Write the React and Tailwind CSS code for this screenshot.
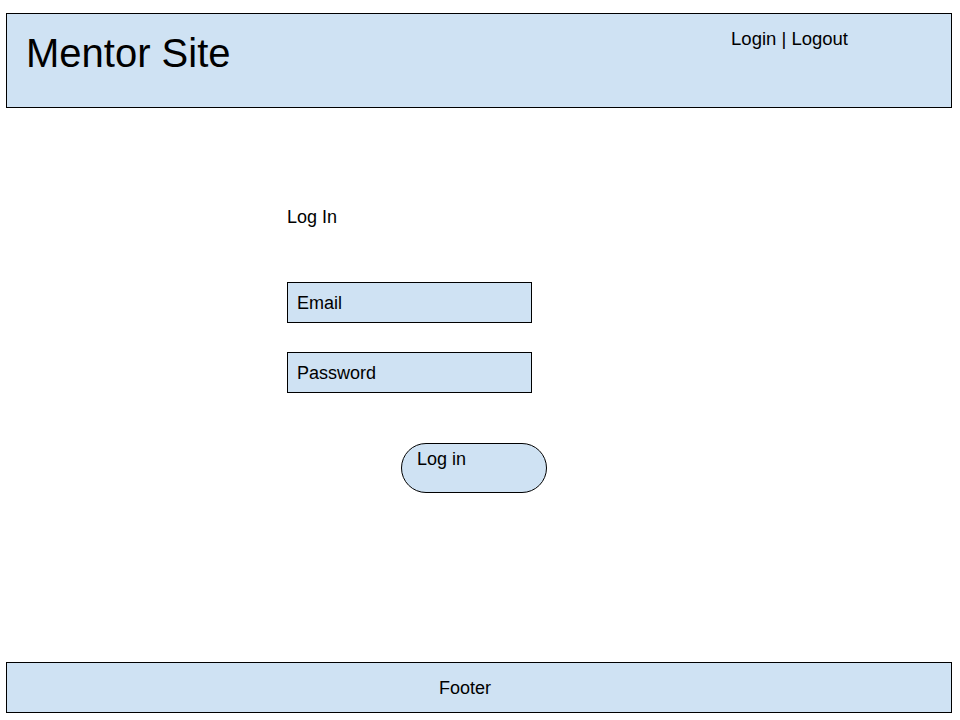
import React from 'react'

export default function App() {
  return (
    <div className="w-[960px] h-[720px] bg-white flex flex-col text-black font-['Liberation_Sans',Arial,sans-serif]">
      <header className="ml-[6px] mt-[13px] w-[946px] h-[95px] border border-black bg-[#cfe2f3] flex justify-between">
        <h1 className="text-[40px] leading-none pl-[19px] pt-[19px]">Mentor Site</h1>
        <div className="text-[18.5px] leading-none pt-[16px] pr-[103px]">Login | Logout</div>
      </header>

      <main className="flex-1 pl-[287px] pt-[100px] flex flex-col items-start">
        <h2 className="text-[18px] leading-none">Log In</h2>
        <div className="mt-[56px] w-[245px] h-[41px] border border-black bg-[#cfe2f3] pl-[9px] flex items-center text-[18px] leading-none">
          Email
        </div>
        <div className="mt-[29px] w-[245px] h-[41px] border border-black bg-[#cfe2f3] pl-[9px] flex items-center text-[18px] leading-none">
          Password
        </div>
        <button className="mt-[50px] ml-[114px] w-[146px] h-[50px] rounded-full border border-black bg-[#cfe2f3] pl-[15px] pt-[6px] text-left flex items-start text-[18px] leading-none">
          Log in
        </button>
      </main>

      <footer className="ml-[6px] mb-[7px] w-[946px] h-[51px] border border-black bg-[#cfe2f3] flex items-center pl-[432px] text-[18px] leading-none">
        Footer
      </footer>
    </div>
  )
}
